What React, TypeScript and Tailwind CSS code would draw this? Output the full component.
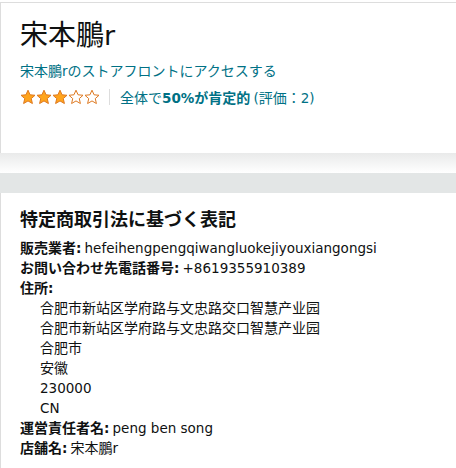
import React from "react";

const FONT = "font-['Noto_Sans_CJK_JP',sans-serif]";

function L({ children }: { children: React.ReactNode }) {
  return <span className="font-['DejaVu_Sans','Noto_Sans_CJK_JP',sans-serif] text-[13.5px] leading-[0]">{children}</span>;
}

function Star({ filled }: { filled: boolean }) {
  return (
    <svg width="16" height="16" viewBox="0 0 24 24" className="shrink-0">
      <path
        d="M12 1.8l3.1 6.9 7.4.7-5.6 5 1.7 7.4L12 17.9l-6.6 3.9 1.7-7.4-5.6-5 7.4-.7z"
        fill={filled ? "#FFA41C" : "#ffffff"}
        stroke="#DE7921"
        strokeWidth="1.5"
        strokeLinejoin="round"
      />
    </svg>
  );
}

function Row({ children, className = "" }: { children: React.ReactNode; className?: string }) {
  return <div className={`h-[20px] ${className}`}>{children}</div>;
}

export default function App() {
  return (
    <div className={`w-[456px] h-[468px] overflow-hidden bg-white text-[#0F1111] ${FONT}`}>
      <div className="pt-[2px]">
        <div className="h-[151px] border-t border-l border-[#dddddd] pl-[19px] pt-[12px]">
          <h1 className="text-[28px] leading-[36px] h-[36px] font-normal">
            宋本鵬<span className="font-['DejaVu_Sans',sans-serif] text-[27px] leading-[0]">r</span>
          </h1>
          <div className="mt-[9px] h-[20px] text-[14px] leading-[20px] text-[#007185]">
            宋本鵬<L>r</L>のストアフロントにアクセスする
          </div>
          <div className="mt-[7px] flex items-center h-[20px]">
            <div className="flex">
              <Star filled />
              <Star filled />
              <Star filled />
              <Star filled={false} />
              <Star filled={false} />
            </div>
            <div className="ml-[9px] w-px h-[16px] bg-[#dddddd]" />
            <div className="ml-[10px] text-[14px] leading-[20px] text-[#007185]">
              全体で<span className="font-bold"><L>50%</L>が肯定的</span> <L>(</L>評価：<L>2)</L>
            </div>
          </div>
        </div>
        <div className="h-[20px] bg-gradient-to-b from-[#e9eaea] to-white" />
        <div className="h-[20px] bg-[#e3e6e6]" />
        <div className="border-l border-[#dddddd] pl-[19px] pt-[13px] h-[300px]">
          <h2 className="text-[18px] leading-[24px] font-bold">特定商取引法に基づく表記</h2>
          <div className="mt-[7px] text-[14px] leading-[20px]">
            <Row><span className="font-bold">販売業者<L>:</L></span> <L>hefeihengpengqiwangluokejiyouxiangongsi</L></Row>
            <Row><span className="font-bold">お問い合わせ先電話番号<L>:</L></span> <L>+8619355910389</L></Row>
            <Row><span className="font-bold">住所<L>:</L></span></Row>
            <div className="pl-[20px]">
              <Row>合肥市新站区学府路与文忠路交口智慧产业园</Row>
              <Row>合肥市新站区学府路与文忠路交口智慧产业园</Row>
              <Row>合肥市</Row>
              <Row>安徽</Row>
              <Row><L>230000</L></Row>
              <Row><L>CN</L></Row>
            </div>
            <Row><span className="font-bold">運営責任者名<L>:</L></span> <L>peng ben song</L></Row>
            <Row><span className="font-bold">店舗名<L>:</L></span> 宋本鵬<L>r</L></Row>
          </div>
        </div>
      </div>
    </div>
  );
}
